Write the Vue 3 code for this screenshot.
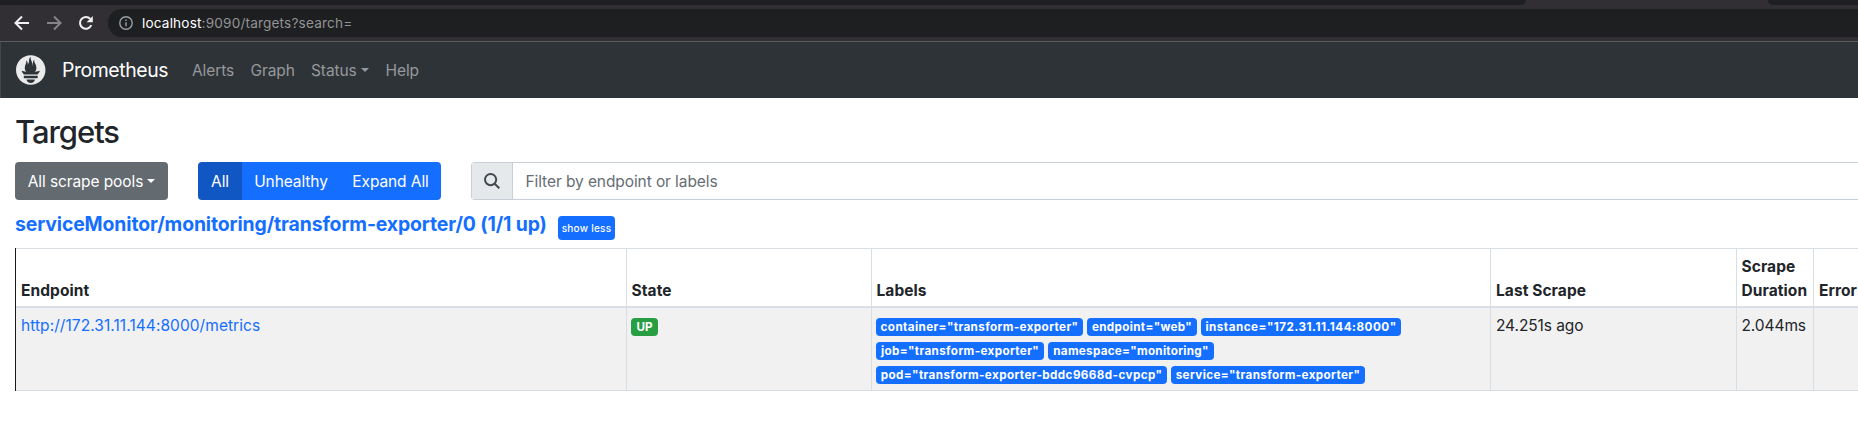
<script setup>
const columns = [
  { key: 'endpoint', title: 'Endpoint' },
  { key: 'state', title: 'State' },
  { key: 'labels', title: 'Labels' },
  { key: 'last', title: 'Last Scrape' },
  { key: 'duration', title: 'Scrape Duration' },
  { key: 'error', title: 'Error' },
]
const labels = [
  { text: 'container="transform-exporter"', width: 207, spacing: 0.38 },
  { text: 'endpoint="web"', width: 110, spacing: 0.33 },
  { text: 'instance="172.31.11.144:8000"', width: 200, spacing: 0.48 },
  { text: 'job="transform-exporter"', width: 168, spacing: 0.36 },
  { text: 'namespace="monitoring"', width: 166, spacing: 0.27 },
  { text: 'pod="transform-exporter-bddc9668d-cvpcp"', width: 291, spacing: 0.39 },
  { text: 'service="transform-exporter"', width: 194, spacing: 0.37 },
]
</script>

<template>
  <div class="window">
    <div class="tabs">
      <div class="tab-rest left"></div>
      <div class="tab-active"></div>
      <div class="tab-rest right"></div>
    </div>
    <div class="toolbar">
      <svg class="nav-icon" viewBox="0 0 16 16"><path d="M15 8H2.500M8 1.500 1.500 8l6.500 6.500" /></svg>
      <svg class="nav-icon dim" viewBox="0 0 16 16"><path d="M1 8h12.500M8 1.500l6.500 6.500-6.500 6.500" /></svg>
      <svg class="nav-icon" viewBox="0 0 16 16">
        <path d="M13.300 10.200A5.900 5.900 0 1 1 12.300 3.900" />
        <path class="solid" d="M14.800 1v6.200H8.600z" />
      </svg>
      <div class="omnibox">
        <svg class="info" viewBox="0 0 14 14"><circle cx="7" cy="7" r="6.200" /><path d="M7 6.200v4M7 3.500v1.500" /></svg>
        <span class="url"><b>localhost</b>:9090/targets?search=</span>
      </div>
    </div>
    <nav class="navbar">
      <svg class="logo" viewBox="0 0 115.333 114">
        <path d="M 56.667,0.667 C 25.372,0.667 0,26.036 0,57.332 c 0,31.295 25.372,56.666 56.667,56.666 31.295,0 56.666,-25.371 56.666,-56.666 0,-31.296 -25.372,-56.665 -56.666,-56.665 z m 0,106.055 c -8.904,0 -16.123,-5.948 -16.123,-13.283 H 72.79 c 0,7.334 -7.219,13.283 -16.123,13.283 z M 83.297,89.04 H 30.034 V 79.382 H 83.298 V 89.04 Z M 83.106,74.411 h -52.92 C 30.01,74.208 29.83,74.008 29.66,73.802 24.208,67.182 22.924,63.726 21.677,60.204 c -0.021,-0.116 6.611,1.355 11.314,2.413 0,0 2.42,0.56 5.958,1.205 -3.397,-3.982 -5.414,-9.044 -5.414,-14.218 0,-11.359 8.712,-21.285 5.569,-29.308 3.059,0.249 6.331,6.456 6.552,16.161 3.252,-4.494 4.613,-12.701 4.613,-17.733 0,-5.21 3.433,-11.262 6.867,-11.469 -3.061,5.045 0.793,9.37 4.219,20.099 1.285,4.03 1.121,10.812 2.113,15.113 C 63.797,33.534 65.333,20.5 71,16 c -2.5,5.667 0.37,12.758 2.333,16.167 3.167,5.5 5.087,9.667 5.087,17.548 0,5.284 -1.951,10.259 -5.242,14.148 3.742,-0.702 6.326,-1.335 6.326,-1.335 l 12.152,-2.371 c 10e-4,-10e-4 -1.765,7.261 -8.55,14.254 z" />
      </svg>
      <span class="brand">Prometheus</span>
      <a class="link alerts">Alerts</a>
      <a class="link graph">Graph</a>
      <a class="link status">Status<i class="caret"></i></a>
      <a class="link help">Help</a>
    </nav>
    <main>
      <h2>Targets</h2>
      <div class="filters">
        <button class="btn pools">All scrape pools<i class="caret"></i></button>
        <div class="group">
          <button class="btn all">All</button>
          <button class="btn unhealthy">Unhealthy</button>
          <button class="btn expand">Expand All</button>
        </div>
        <div class="search">
          <span class="addon">
            <svg viewBox="0 0 16 16"><circle cx="6.600" cy="6.600" r="5.600" /><path d="M10.700 10.700 15.300 15.300" /></svg>
          </span>
          <span class="placeholder">Filter by endpoint or labels</span>
        </div>
      </div>
      <div class="pool">
        <h3>serviceMonitor/monitoring/transform-exporter/0 (1/1 up)</h3>
        <button class="less">show less</button>
      </div>
      <div class="table">
        <div v-for="c in columns" :key="c.key" class="cell head" :class="c.key"><span>{{ c.title }}</span></div>
        <div class="cell"><a class="endpoint-link">http://172.31.11.144:8000/metrics</a></div>
        <div class="cell badges"><span class="badge up">UP</span></div>
        <div class="cell badges">
          <span v-for="l in labels" :key="l.text" class="badge" :style="{ width: l.width + 'px', letterSpacing: l.spacing + 'px' }">{{ l.text }}</span>
        </div>
        <div class="cell"><span class="ago">24.251s ago</span></div>
        <div class="cell duration"><span>2.044ms</span></div>
        <div class="cell error"></div>
      </div>
    </main>
  </div>
</template>

<style>
body { background: #fff; overflow: hidden; }
</style>

<style scoped>
* { box-sizing: border-box; }
.window { width: 1858px; height: 424px; overflow: hidden; font: 400 15.5px/24px Inter, "Liberation Sans", sans-serif; color: #212529; letter-spacing: -0.09px; white-space: nowrap; }
h2, h3 { margin: 0; }
button { font: inherit; letter-spacing: inherit; border: 0; padding: 0; color: #fff; }
.tabs { display: flex; height: 5px; background: #312f34; }
.tab-rest { background: #1e1f21; }
.left { width: 1526px; border-bottom-right-radius: 6px; }
.tab-active { width: 242px; }
.right { flex: 1; border-bottom-left-radius: 6px; }
.toolbar { display: flex; align-items: center; height: 37px; padding-left: 14px; background: #312f34; border-bottom: 1px solid #5a5c5e; }
.nav-icon { width: 16px; height: 16px; margin-right: 16px; fill: none; stroke: #f1f1f1; stroke-width: 2; }
.nav-icon.dim { stroke: #858488; }
.nav-icon .solid { fill: #f1f1f1; stroke: none; }
.omnibox { flex: 1; display: flex; align-items: center; height: 28px; margin-left: -2px; padding-left: 11px; border-radius: 14px 0 0 14px; background: #1e1f21; }
.info { width: 14px; height: 14px; margin-right: 9px; fill: none; stroke: #9aa0a6; stroke-width: 1.400; }
.url { font-size: 13.600px; color: #929395; letter-spacing: 0.170px; }
.url b { font-weight: 400; color: #fff; }
.navbar { display: flex; align-items: center; height: 56px; padding-left: 15px; background: #2e3338; border-left: 1px solid #424649; }
.logo { width: 30px; height: 30px; fill: #ebebeb; }
.brand { width: 146px; padding-left: 16px; color: #fff; font-size: 19.400px; letter-spacing: -0.4px; }
.link { padding-top: 1px; color: #96999b; }
.alerts { width: 58.500px; }
.graph { width: 60.500px; }
.status { width: 74.500px; }
.caret { display: inline-block; margin-left: 4px; vertical-align: 4px; border: 4.500px solid transparent; border-top-color: currentColor; border-bottom: 0; }
main { padding: 16px 0 0 15px; }
h2 { height: 38px; margin-bottom: 10px; font-size: 31px; line-height: 36px; font-weight: 500; letter-spacing: -1.050px; }
.filters { display: flex; height: 38px; }
.btn { height: 38px; padding-top: 1px; background: #146eff; }
.pools { width: 153px; margin-right: 30px; border-radius: 4px; background: #636a70; }
.group { display: flex; width: 243px; margin-right: 30px; border-radius: 4px; overflow: hidden; }
.all { width: 44px; background: #1057c4; }
.unhealthy { width: 98px; }
.expand { width: 101px; }
.search { flex: 1; display: flex; align-items: center; border: 1px solid #c8cfd6; border-right: 0; border-radius: 4px 0 0 4px; }
.addon { display: flex; align-items: center; justify-content: center; width: 41px; height: 36px; background: #e6e9ec; border-right: 1px solid #c8cfd6; }
.addon svg { width: 16px; height: 16px; fill: none; stroke: #43494f; stroke-width: 2; }
.placeholder { padding: 1px 0 0 12.500px; color: #666d74; }
.pool { display: flex; height: 48px; padding-top: 12px; }
h3 { width: 543px; font-size: 19.400px; font-weight: 700; line-height: 24px; color: #146eff; letter-spacing: -0.12px; }
.less { width: 57px; height: 24px; margin-top: 4px; padding-bottom: 1px; border-radius: 4px; background: #146eff; font-size: 10px; font-weight: 500; letter-spacing: 0.250px; }
.table { display: grid; grid-template-columns: 611px 245px 619px 246px 77px 1fr; grid-template-rows: 60px 83px; border-left: 1px solid #15181b; }
.cell { padding: 6px 0 0 5px; border-right: 1px solid #d9dee3; border-bottom: 1px solid #d9dee3; background: #f1f1f1; }
.head { display: flex; align-items: flex-end; padding-bottom: 3px; background: #fff; border-top: 1px solid #d9dee3; border-bottom-width: 2px; font-weight: 700; letter-spacing: 0.080px; white-space: normal; }
.state, .labels, .duration { padding-left: 4.500px; }
.cell.error { border-right: 0; white-space: nowrap; }
.endpoint-link { color: #146eff; letter-spacing: 0.060px; }
.badge { height: 18px; border-radius: 4px; background: #146eff; color: #fff; font-size: 11.700px; font-weight: 700; line-height: 18px; text-align: center; }
.up { width: 27px; background: #289e43; }
.badges { display: flex; flex-wrap: wrap; align-content: flex-start; gap: 6px 4px; padding: 10px 80px 0 4px; }
</style>
